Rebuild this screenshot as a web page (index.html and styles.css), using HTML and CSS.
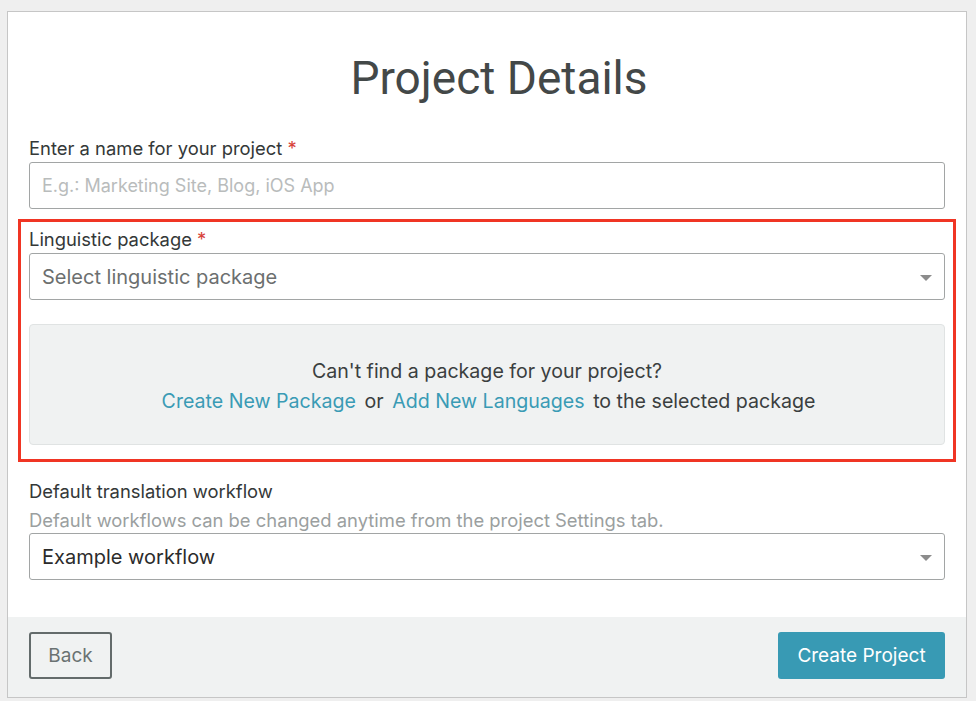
FILE: index.html
```html
<!DOCTYPE html>
<html lang="en">
  <head>
    <meta charset="UTF-8" />
    <meta name="viewport" content="width=device-width, initial-scale=1.0" />
    <title>Project Details</title>
    <link rel="stylesheet" href="styles.css">
  </head>
  <body>
    <div class="card">
      <div class="card-body">
        <h1 class="title">Project Details</h1>

        <div class="field">
          <label class="label">Enter a name for your project <span class="req">*</span></label>
          <input class="input" type="text" placeholder="E.g.: Marketing Site, Blog, iOS App" />
        </div>

        <div class="highlight">
          <label class="label">Linguistic package <span class="req">*</span></label>
          <div class="select select-empty">
            <span>Select linguistic package</span>
            <svg class="caret" width="12" height="6" viewBox="0 0 12 6"><path d="M0 0h12L6 6z" fill="#8c8c8c"/></svg>
          </div>
          <div class="note">
            <p>Can't find a package for your project?</p>
            <p><a href="#">Create New Package</a> or <a href="#">Add New Languages</a> to the selected package</p>
          </div>
        </div>

        <div class="field field-last">
          <label class="label">Default translation workflow</label>
          <div class="hint">Default workflows can be changed anytime from the project Settings tab.</div>
          <div class="select">
            <span>Example workflow</span>
            <svg class="caret" width="12" height="6" viewBox="0 0 12 6"><path d="M0 0h12L6 6z" fill="#8c8c8c"/></svg>
          </div>
        </div>
      </div>

      <div class="card-footer">
        <button class="btn btn-back">Back</button>
        <button class="btn btn-primary">Create Project</button>
      </div>
    </div>
  </body>
</html>
```

FILE: styles.css
```css
body {
  margin: 0;
  padding: 11px 0 0 7px;
  background: #efefef;
  font-family: Inter, Roboto, "Liberation Sans", Arial, sans-serif;
  color: #3b3f3f;
}

.card {
  width: 958px;
  background: #ffffff;
  border: 1px solid #c6c6c6;
}

.card-body {
  padding: 38px 21px 37px;
}

.title {
  margin: 0 0 30px;
  padding-left: 24px;
  font-family: Roboto, "Liberation Sans", Arial, sans-serif;
  font-size: 46px;
  line-height: 56px;
  font-weight: 400;
  text-align: center;
  color: #434848;
}

.label {
  display: block;
  font-size: 18.4px;
  line-height: 24px;
  color: #343838;
  margin-bottom: 2px;
}

.req {
  color: #d8433a;
}

.input,
.select {
  box-sizing: border-box;
  width: 100%;
  height: 47px;
  border: 1px solid #a2a5a5;
  border-radius: 3px;
  padding: 0 12px;
  font-family: inherit;
  font-size: 20px;
  color: #2b2b2b;
  background: #ffffff;
}

.input {
  font-size: 18px;
}

.input::placeholder {
  color: #b9bcbc;
}

.select {
  display: flex;
  align-items: center;
  justify-content: space-between;
}

.select-empty {
  color: #6c6f6f;
}

.caret {
  margin-top: 2px;
}

.field {
  margin-bottom: 10px;
}

.field-last {
  margin: 17px 0 0;
}

.highlight {
  margin: 0 -11px;
  border: 3px solid #f03524;
  padding: 5px 8px 14px;
}

.note {
  margin-top: 24px;
  height: 121px;
  box-sizing: border-box;
  padding-top: 31px;
  background: #f0f2f2;
  border: 1px solid #e0e3e3;
  border-radius: 4px;
  text-align: center;
  font-size: 19.6px;
  line-height: 30px;
  color: #3b3f3f;
}

.note p {
  margin: 0;
}

.note a {
  color: #3a9bb5;
  text-decoration: none;
  margin: 0 3px;
}

.hint {
  margin-top: 5px;
  font-size: 18.4px;
  line-height: 24px;
  color: #9b9f9f;
}

.field-last .select {
  margin-top: 1px;
}

.card-footer {
  display: flex;
  justify-content: space-between;
  align-items: center;
  padding: 15px 21px 18px;
  background: #f0f2f2;
}

.btn {
  font-family: inherit;
  font-size: 19px;
  border-radius: 3px;
  height: 47px;
  cursor: pointer;
}

.btn-back {
  width: 83px;
  background: #f0f2f2;
  border: 2px solid #636b6b;
  color: #6a7272;
}

.btn-primary {
  width: 167px;
  background: #389ab4;
  border: 0;
  color: #ffffff;
}
```
